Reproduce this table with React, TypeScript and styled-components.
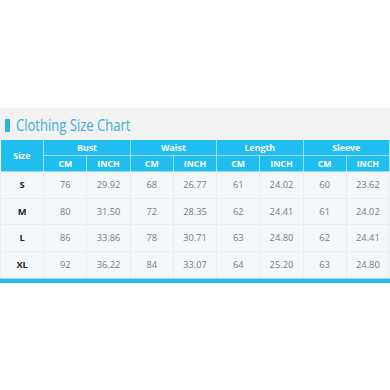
import React from "react";
import styled, { createGlobalStyle } from "styled-components";

const Global = createGlobalStyle`
  html, body { margin: 0; padding: 0; background: #ffffff; }
  body { font-family: "Open Sans", "Liberation Sans", sans-serif; }
`;

const Page = styled.div`
  width: 390px;
  height: 390px;
  padding-top: 108px;
  box-sizing: border-box;
  background: #ffffff;
`;

const TitleBar = styled.div`
  height: 32px;
  background: #f2f2f2;
  display: flex;
  align-items: center;
  padding-left: 5px;
  gap: 6px;
  box-sizing: border-box;
  padding-top: 2px;
`;

const Marker = styled.span`
  width: 4.5px;
  height: 13px;
  background: #27b4e6;
`;

const Title = styled.h1`
  margin: 0;
  font-family: "Open Sans", Lato, sans-serif;
  font-weight: 400;
  font-size: 16.5px;
  line-height: 1;
  color: #3aafd6;
  transform: scaleX(0.79);
  transform-origin: left center;
  white-space: nowrap;
`;

const Table = styled.table`
  width: 390px;
  border-collapse: collapse;
  table-layout: fixed;
`;

const HeadCell = styled.th<{ $tall?: boolean }>`
  background: #1fbdf0;
  color: #ffffff;
  font-weight: 700;
  font-size: 8.8px;
  height: ${(p) => (p.$tall ? "30px" : "15px")};
  padding: 0;
  border: 1px solid rgba(255, 255, 255, 0.55);
  border-top: none;
  text-align: center;
`;

const Row = styled.tr`
  height: 26.5px;
`;

const Cell = styled.td<{ $size?: boolean }>`
  background: #f4f7fa;
  border: 1px solid #e8edf1;
  color: ${(p) => (p.$size ? "#1f1f1f" : "#7a7a7a")};
  font-weight: ${(p) => (p.$size ? 700 : 400)};
  font-size: 9.3px;
  text-align: center;
  padding: 0;
`;

const BottomBar = styled.div`
  height: 4px;
  background: #27b9ea;
  border-top: 1px solid #9fdcf3;
`;

const rows = [
  ["S", "76", "29.92", "68", "26.77", "61", "24.02", "60", "23.62"],
  ["M", "80", "31.50", "72", "28.35", "62", "24.41", "61", "24.02"],
  ["L", "86", "33.86", "78", "30.71", "63", "24.80", "62", "24.41"],
  ["XL", "92", "36.22", "84", "33.07", "64", "25.20", "63", "24.80"],
];

const groups = ["Bust", "Waist", "Length", "Sleeve"];

export default function App() {
  return (
    <Page>
      <Global />
      <TitleBar>
        <Marker />
        <Title>Clothing Size Chart</Title>
      </TitleBar>
      <Table>
        <thead>
          <tr>
            <HeadCell rowSpan={2} $tall style={{ borderLeft: "none" }}>
              Size
            </HeadCell>
            {groups.map((g) => (
              <HeadCell key={g} colSpan={2}>
                {g}
              </HeadCell>
            ))}
          </tr>
          <tr>
            {groups.map((g) => (
              <React.Fragment key={g}>
                <HeadCell>CM</HeadCell>
                <HeadCell>INCH</HeadCell>
              </React.Fragment>
            ))}
          </tr>
        </thead>
        <tbody>
          {rows.map((r) => (
            <Row key={r[0]}>
              {r.map((v, i) => (
                <Cell key={i} $size={i === 0}>
                  {v}
                </Cell>
              ))}
            </Row>
          ))}
        </tbody>
      </Table>
      <BottomBar />
    </Page>
  );
}
